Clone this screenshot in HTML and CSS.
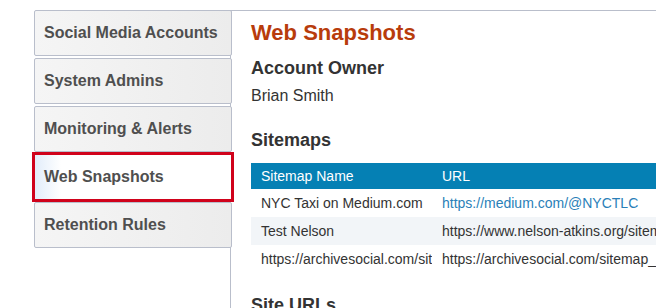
FILE: index.html
```html
<!DOCTYPE html>
<html lang="en">
<head>
<meta charset="utf-8">
<title>Web Snapshots</title>
<link rel="stylesheet" href="styles.css">
</head>
<body>
<div class="layout">
  <nav class="sidebar">
    <a class="tab">Social Media Accounts</a>
    <a class="tab">System Admins</a>
    <a class="tab">Monitoring &amp; Alerts</a>
    <a class="tab tab-active">Web Snapshots</a>
    <a class="tab">Retention Rules</a>
  </nav>
  <main class="panel">
    <h1 class="page-title">Web Snapshots</h1>
    <h2 class="section-title section-owner">Account Owner</h2>
    <p class="owner-name">Brian Smith</p>
    <h2 class="section-title section-sitemaps">Sitemaps</h2>
    <table class="sitemaps">
      <colgroup><col class="col-name"><col class="col-url"></colgroup>
      <thead>
        <tr><th>Sitemap Name</th><th>URL</th></tr>
      </thead>
      <tbody>
        <tr><td>NYC Taxi on Medium.com</td><td><a class="link">https://medium.com/@NYCTLC</a></td></tr>
        <tr class="stripe"><td>Test Nelson</td><td>https://www.nelson-atkins.org/sitemap.xml</td></tr>
        <tr><td>https://archivesocial.com/sitemap_index.xml</td><td>https://archivesocial.com/sitemap_index.xml</td></tr>
      </tbody>
    </table>
    <h2 class="section-title section-urls">Site URLs</h2>
  </main>
</div>
</body>
</html>
```

FILE: styles.css
```css
html, body {
  margin: 0;
  padding: 0;
  overflow: hidden;
  background: #fff;
}
body {
  font-family: "Liberation Sans", Arial, sans-serif;
  color: #333;
}
.layout {
  display: flex;
  align-items: stretch;
  padding: 10px 0 0 34px;
  min-height: 298px;
}
.sidebar {
  flex: none;
  width: 196px;
  display: flex;
  flex-direction: column;
  gap: 2px;
}
.tab {
  position: relative;
  z-index: 1;
  box-sizing: border-box;
  width: 198px;
  height: 46px;
  display: flex;
  align-items: center;
  padding-left: 9px;
  border: 1px solid #b9becb;
  border-radius: 2px;
  background: linear-gradient(to right, #f5f5f5, #ececec);
  color: #4f4f4f;
  font-size: 16px;
  font-weight: bold;
  text-decoration: none;
  white-space: nowrap;
}
.tab-active {
  border-radius: 0;
  background: linear-gradient(to right, #e2edfa 0, #ffffff 26px);
  outline: 3px solid #d0021b;
  outline-offset: -1px;
  z-index: 2;
}
.panel {
  flex: none;
  width: 640px;
  border-top: 1px solid #b9becb;
  border-left: 1px solid #b9becb;
  padding: 9px 0 0 20px;
}
.page-title {
  margin: 0;
  font-size: 22px;
  line-height: 26px;
  font-weight: bold;
  color: #b83c0c;
}
.section-title {
  margin: 0;
  font-size: 18px;
  line-height: 22px;
  font-weight: bold;
  color: #333;
}
.section-owner { margin-top: 11px; }
.section-sitemaps { margin-top: 23px; }
.section-urls { margin-top: 21px; }
.owner-name {
  margin: 7px 0 0;
  font-size: 16px;
  line-height: 20px;
  color: #333;
}
.sitemaps {
  margin-top: 12px;
  width: 620px;
  border-collapse: collapse;
  table-layout: fixed;
  font-size: 14px;
}
.col-name { width: 181px; }
.sitemaps th {
  height: 26px;
  padding: 0 10px;
  background: #0580b4;
  color: #fff;
  font-weight: normal;
  text-align: left;
  white-space: nowrap;
}
.sitemaps td {
  height: 28px;
  padding: 0 10px;
  white-space: nowrap;
  overflow: hidden;
  color: #333;
}
.sitemaps .stripe td {
  background: #f2f5f8;
}
.link {
  color: #2a7fb8;
  text-decoration: none;
}
```
